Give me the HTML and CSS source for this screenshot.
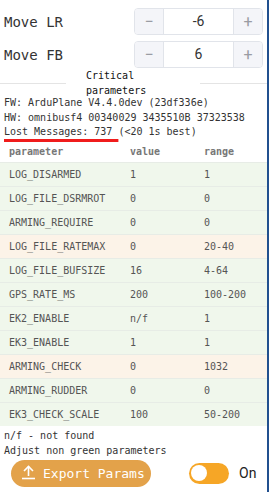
FILE: index.html
```html
<!DOCTYPE html>
<html>
<head>
<meta charset="utf-8">
<link rel="stylesheet" href="styles.css">
</head>
<body>
<div class="panel">
  <div class="move-row first">
    <span class="move-label">Move LR</span>
    <div class="stepper">
      <button class="step-btn">−</button>
      <div class="step-value">-6</div>
      <button class="step-btn">+</button>
    </div>
  </div>
  <div class="move-row">
    <span class="move-label">Move FB</span>
    <div class="stepper">
      <button class="step-btn">−</button>
      <div class="step-value">6</div>
      <button class="step-btn">+</button>
    </div>
  </div>

  <section class="critical">
    <div class="critical-head">
      <div class="critical-title">
        <div>Critical</div>
        <div>parameters</div>
      </div>
    </div>
    <div class="info">
      <div>FW: ArduPlane V4.4.0dev (23df336e)</div>
      <div>HW: omnibusf4 00340029 3435510B 37323538</div>
      <div><span class="lost">Lost Messages: 737 </span>(&lt;20 1s best)</div>
    </div>

    <div class="table">
      <div class="trow thead"><span>parameter</span><span>value</span><span>range</span></div>
      <div class="trow ok"><span>LOG_DISARMED</span><span>1</span><span>1</span></div>
      <div class="trow ok"><span>LOG_FILE_DSRMROT</span><span>0</span><span>0</span></div>
      <div class="trow ok"><span>ARMING_REQUIRE</span><span>0</span><span>0</span></div>
      <div class="trow warn"><span>LOG_FILE_RATEMAX</span><span>0</span><span>20-40</span></div>
      <div class="trow ok"><span>LOG_FILE_BUFSIZE</span><span>16</span><span>4-64</span></div>
      <div class="trow ok"><span>GPS_RATE_MS</span><span>200</span><span>100-200</span></div>
      <div class="trow ok"><span>EK2_ENABLE</span><span>n/f</span><span>1</span></div>
      <div class="trow ok"><span>EK3_ENABLE</span><span>1</span><span>1</span></div>
      <div class="trow warn"><span>ARMING_CHECK</span><span>0</span><span>1032</span></div>
      <div class="trow ok"><span>ARMING_RUDDER</span><span>0</span><span>0</span></div>
      <div class="trow ok"><span>EK3_CHECK_SCALE</span><span>100</span><span>50-200</span></div>
    </div>

    <div class="notes">
      <div>n/f - not found</div>
      <div>Adjust non green parameters</div>
    </div>
  </section>

  <div class="footer">
    <button class="export-btn">
      <svg class="export-icon" width="15" height="16" viewBox="0 0 15 16" fill="none" stroke="#fff" stroke-width="1.6">
        <path d="M7.5 12V2.5"/>
        <path d="M3 7l4.5-4.5L12 7"/>
        <path d="M1 14.5h13"/>
      </svg>
      <span>Export Params</span>
    </button>
    <div class="toggle-wrap">
      <div class="toggle"><div class="knob"></div></div>
      <span class="toggle-label">On</span>
    </div>
  </div>
</div>
</body>
</html>
```

FILE: styles.css
```css
html, body {
  margin: 0;
  padding: 0;
  background: #fff;
}

.panel {
  width: 267px;
  height: 492px;
  border-right: 2px solid #21508f;
  font-family: "DejaVu Sans Mono", monospace;
  color: #333;
  overflow: hidden;
}

.move-row {
  display: flex;
  align-items: center;
  justify-content: space-between;
  padding: 0 4px 0 4px;
  height: 27px;
  margin-top: 6px;
}

.move-row.first {
  margin-top: 8px;
}

.move-label {
  font-size: 14px;
  color: #333;
}

.stepper {
  display: flex;
  width: 129px;
  height: 27px;
  box-sizing: border-box;
  border: 1px solid #e1e4ea;
  border-radius: 4px;
  overflow: hidden;
}

.step-btn {
  width: 28px;
  border: none;
  background: #f4f5f9;
  color: #9a9ca3;
  font-family: "Roboto", sans-serif;
  font-size: 16px;
  padding: 0;
  line-height: 25px;
}

.step-value {
  flex: 1;
  text-align: center;
  border-left: 1px solid #e1e4ea;
  border-right: 1px solid #e1e4ea;
  font-family: "Roboto", sans-serif;
  font-size: 14px;
  line-height: 25px;
  color: #333;
}

.critical-head {
  display: flex;
  background: linear-gradient(#e4e4e4, #e4e4e4) 0 15px / 100% 1px no-repeat;
}

.critical-title {
  margin-left: 66px;
  width: 134px;
  box-sizing: border-box;
  padding-left: 20px;
  background: #fff;
  font-size: 10px;
  line-height: 15px;
  color: #111;
}

.info {
  font-size: 10px;
  line-height: 14.6px;
  padding-left: 4px;
  margin-top: -2px;
  color: #333;
}

.lost {
  text-decoration: underline;
  text-decoration-color: #f01c1c;
  text-decoration-thickness: 3px;
  text-underline-offset: 4px;
  text-decoration-skip-ink: none;
}

.table {
  margin-top: 1px;
  font-size: 10px;
  color: #555;
}

.trow {
  display: grid;
  grid-template-columns: 121px 74px 1fr;
  height: 24px;
  align-items: center;
  border-top: 1px solid #e7ece6;
  box-sizing: border-box;
}

.trow span {
  padding-left: 9px;
}

.thead {
  height: 21px;
  border-top: none;
  font-weight: bold;
  color: #777;
}

.ok {
  background: #f0f7ec;
}

.warn {
  background: #fcf3e8;
}

.notes {
  font-size: 10px;
  line-height: 15px;
  padding-left: 4px;
  margin-top: 2px;
  color: #333;
}

.footer {
  display: flex;
  align-items: center;
  padding-left: 11px;
  margin-top: 2px;
}

.export-btn {
  display: flex;
  align-items: center;
  gap: 7px;
  width: 140px;
  height: 27px;
  border: none;
  border-radius: 14px;
  background: #e3a24a;
  color: #fff;
  font-family: "DejaVu Sans Mono", monospace;
  font-size: 13px;
  padding: 0 0 0 10px;
}

.export-icon {
  display: block;
  margin-top: -2px;
}

.toggle-wrap {
  display: flex;
  align-items: center;
  margin-left: 38px;
  gap: 10px;
}

.toggle {
  width: 40px;
  height: 21px;
  border-radius: 11px;
  background: #f6a626;
  display: flex;
  align-items: center;
  padding-left: 2px;
  box-sizing: border-box;
}

.knob {
  width: 16px;
  height: 16px;
  border-radius: 50%;
  background: #fff;
}

.toggle-label {
  font-family: "Roboto", sans-serif;
  font-size: 14px;
  color: #222;
}
```
